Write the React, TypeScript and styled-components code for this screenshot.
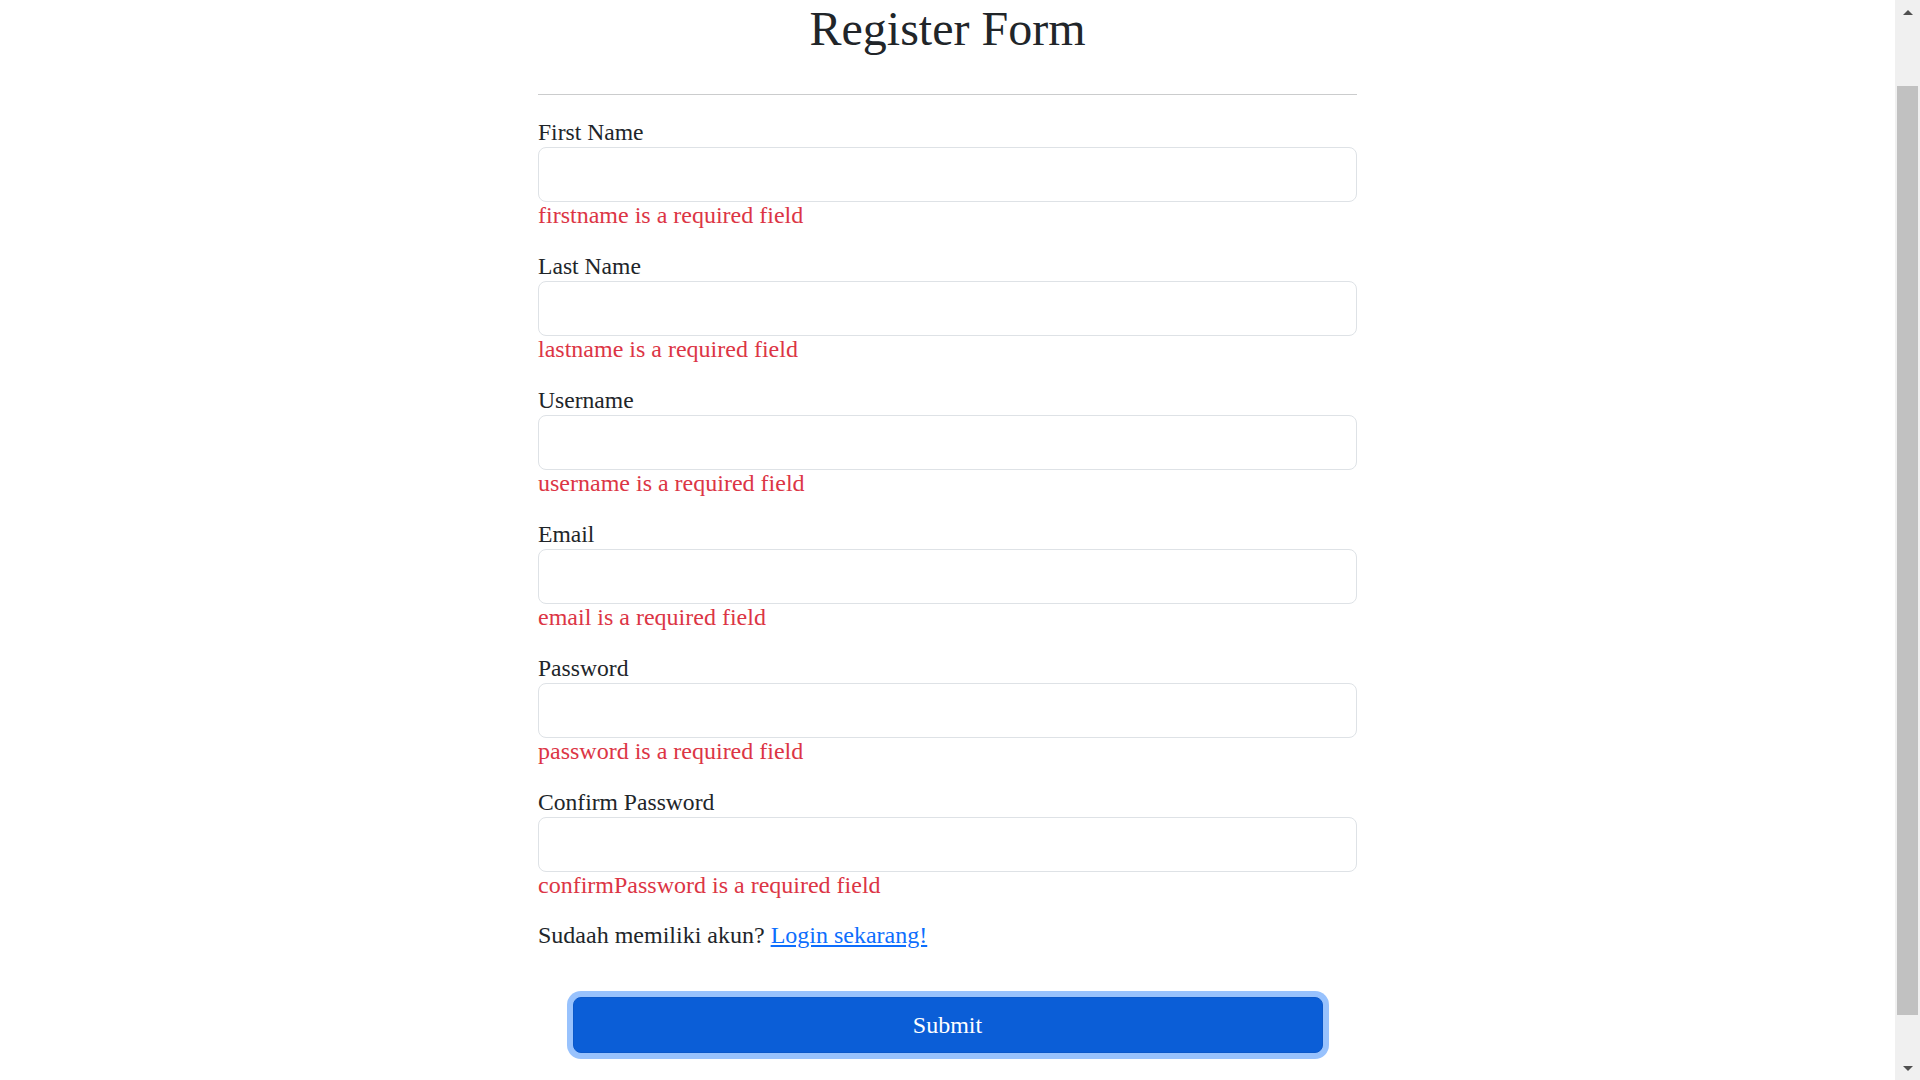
import React from "react";
import styled, { createGlobalStyle } from "styled-components";

const GlobalStyle = createGlobalStyle`
  html, body {
    margin: 0;
    padding: 0;
    background: #ffffff;
    overflow: hidden;
  }
  body {
    font-family: "Liberation Serif", "Times New Roman", serif;
    color: #212529;
  }
  * { box-sizing: border-box; }
`;

const Page = styled.div`
  display: flex;
  width: 100vw;
  height: 100vh;
`;

const Main = styled.main`
  flex: 1;
  display: flex;
  justify-content: center;
  align-items: flex-start;
`;

const Form = styled.form`
  width: 819px;
  display: flex;
  flex-direction: column;
`;

const Title = styled.h1`
  margin: 2px 0 0;
  font-family: "Liberation Serif", "Times New Roman", serif;
  font-weight: 400;
  font-size: 48px;
  line-height: 53px;
  text-align: center;
  color: #212529;
`;

const Divider = styled.hr`
  width: 100%;
  margin: 39px 0 20px;
  border: 0;
  border-top: 1px solid #cbcccd;
`;

const Field = styled.div`
  display: flex;
  flex-direction: column;
  margin-bottom: 22px;
`;

const Label = styled.label`
  padding-top: 2px;
  font-family: "Liberation Serif", "Times New Roman", serif;
  font-size: 23.6px;
  line-height: 30px;
  color: #212529;
`;

const Input = styled.input`
  width: 100%;
  height: 55px;
  padding: 8px 16px;
  border: 1px solid #dee2e6;
  border-radius: 8px;
  background: #ffffff;
  font-family: "Liberation Serif", serif;
  font-size: 20px;
  outline: none;
`;

const ErrorText = styled.div`
  padding-top: 1px;
  font-family: "Liberation Serif", "Times New Roman", serif;
  font-size: 24px;
  line-height: 24px;
  color: #dc3545;
`;

const Prompt = styled.p`
  margin: 0;
  padding-top: 1px;
  font-family: "Liberation Serif", "Times New Roman", serif;
  font-size: 24px;
  line-height: 31px;
  color: #212529;
`;

const LoginLink = styled.a`
  color: #0d6efd;
  text-decoration: underline;
`;

const SubmitButton = styled.button`
  align-self: center;
  width: 750px;
  height: 56px;
  margin-top: 46px;
  border: 1px solid #0a58ca;
  border-radius: 8px;
  background: #0b5ed7;
  color: #ffffff;
  font-family: "Liberation Serif", "Times New Roman", serif;
  font-size: 24px;
  box-shadow: 0 0 0 6px #98c2fd;
  cursor: pointer;
`;

const ScrollTrack = styled.div`
  width: 25px;
  height: 100vh;
  background: #f0f0f0;
  display: flex;
  flex-direction: column;
  align-items: center;
`;

const ArrowBox = styled.div`
  height: 24px;
  width: 100%;
  display: flex;
  align-items: center;
  justify-content: center;
`;

const ArrowUp = styled.div`
  width: 0;
  height: 0;
  border-left: 5px solid transparent;
  border-right: 5px solid transparent;
  border-bottom: 5px solid #505050;
`;

const ArrowDown = styled.div`
  width: 0;
  height: 0;
  border-left: 5px solid transparent;
  border-right: 5px solid transparent;
  border-top: 5px solid #505050;
`;

const ThumbArea = styled.div`
  flex: 1;
  width: 100%;
  display: flex;
  justify-content: center;
  padding-top: 62px;
  padding-bottom: 41px;
`;

const Thumb = styled.div`
  width: 21px;
  height: 100%;
  background: #c1c1c1;
`;

const fields = [
  { label: "First Name", error: "firstname is a required field", type: "text" },
  { label: "Last Name", error: "lastname is a required field", type: "text" },
  { label: "Username", error: "username is a required field", type: "text" },
  { label: "Email", error: "email is a required field", type: "email" },
  { label: "Password", error: "password is a required field", type: "password" },
  { label: "Confirm Password", error: "confirmPassword is a required field", type: "password" },
];

export default function App() {
  return (
    <>
      <GlobalStyle />
      <Page>
        <Main>
          <Form onSubmit={(e) => e.preventDefault()}>
            <Title>Register Form</Title>
            <Divider />
            {fields.map((f) => (
              <Field key={f.label}>
                <Label>{f.label}</Label>
                <Input type={f.type} />
                <ErrorText>{f.error}</ErrorText>
              </Field>
            ))}
            <Prompt>
              Sudaah memiliki akun? <LoginLink href="#">Login sekarang!</LoginLink>
            </Prompt>
            <SubmitButton type="submit">Submit</SubmitButton>
          </Form>
        </Main>
        <ScrollTrack>
          <ArrowBox>
            <ArrowUp />
          </ArrowBox>
          <ThumbArea>
            <Thumb />
          </ThumbArea>
          <ArrowBox>
            <ArrowDown />
          </ArrowBox>
        </ScrollTrack>
      </Page>
    </>
  );
}
